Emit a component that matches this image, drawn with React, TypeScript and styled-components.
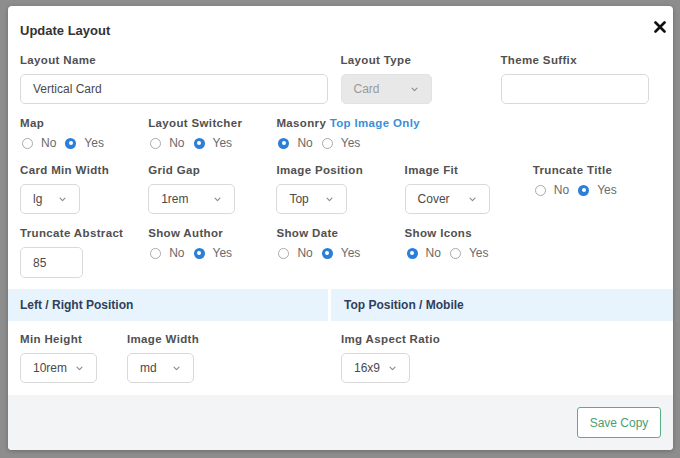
import React from "react";
import styled, { createGlobalStyle } from "styled-components";

const Global = createGlobalStyle`
  html, body { margin: 0; padding: 0; }
  body {
    width: 680px; height: 458px; overflow: hidden;
    background: #8d8d8d;
    font-family: "Liberation Sans", Arial, Helvetica, sans-serif;
  }
  * { box-sizing: border-box; }
`;

const Backdrop = styled.div`
  width: 680px;
  height: 458px;
  padding: 6px 7px 8px 8px;
  background: #8d8d8d;
`;

const Modal = styled.div`
  width: 665px;
  height: 444px;
  background: #fff;
  border-radius: 4px;
  box-shadow: 0 1px 4px rgba(0, 0, 0, 0.25);
  display: flex;
  flex-direction: column;
  overflow: hidden;
`;

const Header = styled.div`
  display: flex;
  justify-content: space-between;
  align-items: flex-start;
  padding: 15px 7px 0 12px;
  height: 47px;
`;

const Title = styled.h1`
  margin: 1px 0 0;
  font-size: 13px;
  line-height: 18px;
  font-weight: 700;
  color: #333;
`;

const Close = styled.button`
  border: 0;
  background: none;
  padding: 0;
  width: 12px;
  height: 12px;
  display: flex;
  cursor: pointer;
`;

const Body = styled.div`
  padding: 0 12px;
  display: flex;
  flex-direction: column;
  gap: 12px;
`;

const TopRow = styled.div`
  display: grid;
  grid-template-columns: 320.5px 160px 1fr;
`;

const Grid5 = styled.div`
  display: grid;
  grid-template-columns: repeat(5, minmax(0, 1fr));
`;

const Field = styled.div`
  display: flex;
  flex-direction: column;
  gap: 7px;
  min-width: 0;
`;

const Label = styled.div`
  font-size: 11.5px;
  line-height: 14px;
  font-weight: 700;
  letter-spacing: 0.35px;
  color: #505050;
  white-space: nowrap;
`;

const LinkText = styled.span`
  color: #3a8fd8;
`;

const TextInput = styled.div<{ $w: number }>`
  width: ${(p) => p.$w}px;
  height: ${(p) => (p.$w < 100 ? 31 : 30)}px;
  border: 1px solid #d9d9d9;
  border-radius: 5px;
  padding: 0 12px;
  display: flex;
  align-items: center;
  font-size: 12px;
  color: #4a4a4a;
`;

const Select = styled.div<{ $w: number; $disabled?: boolean }>`
  width: ${(p) => p.$w}px;
  height: 30px;
  border: 1px solid ${(p) => (p.$disabled ? "#e2e2e2" : "#d9d9d9")};
  background: ${(p) => (p.$disabled ? "#e8e8e8" : "#fff")};
  border-radius: 5px;
  padding: 0 13px 0 12px;
  display: flex;
  align-items: center;
  justify-content: space-between;
  font-size: 12px;
  color: ${(p) => (p.$disabled ? "#9a9a9a" : "#4a4a4a")};
`;

const Radios = styled.div`
  display: flex;
  align-items: center;
  height: 16px;
  margin-top: -2px;
  gap: 9px;
  padding-left: 2px;
`;

const RadioItem = styled.label`
  display: flex;
  align-items: center;
  gap: 8px;
  font-size: 12px;
  color: #6a6a6a;
`;

const Dot = styled.span<{ $on?: boolean }>`
  width: 11px;
  height: 11px;
  border-radius: 50%;
  flex: none;
  background: ${(p) => (p.$on ? "#2b7fd8" : "#fff")};
  border: ${(p) => (p.$on ? "none" : "1px solid #a9a9a9")};
  display: flex;
  align-items: center;
  justify-content: center;
  &::after {
    content: "";
    width: 4px;
    height: 4px;
    border-radius: 50%;
    background: #fff;
    display: ${(p) => (p.$on ? "block" : "none")};
  }
`;

const Sections = styled.div`
  margin-top: 11px;
  display: grid;
  grid-template-columns: 320px 1fr;
  column-gap: 3px;
`;

const SectionHead = styled.div<{ $pad: number }>`
  height: 32px;
  background: #e8f4fd;
  padding-left: ${(p) => p.$pad}px;
  display: flex;
  align-items: center;
  font-size: 12px;
  font-weight: 700;
  color: #2f3f5b;
`;

const SectionBody = styled.div<{ $pad: number }>`
  padding: 11px 0 0 ${(p) => p.$pad}px;
  display: flex;
  gap: 30px;
`;

const Footer = styled.div`
  margin-top: auto;
  height: 55px;
  background: #f3f4f6;
  display: flex;
  justify-content: flex-end;
  align-items: flex-start;
  padding: 12px 12px 0 0;
`;

const SaveButton = styled.button`
  width: 84px;
  height: 31px;
  border: 1.5px solid #55b184;
  border-radius: 3px;
  background: #fff;
  color: #4a9e74;
  font-family: inherit;
  font-size: 12px;
  padding: 0;
`;

const Chevron = () => (
  <svg width="7" height="5" viewBox="0 0 7 5" fill="none">
    <path d="M1 1.2 L3.5 3.6 L6 1.2" stroke="#8a8a8a" strokeWidth="1.1" strokeLinecap="round" strokeLinejoin="round" />
  </svg>
);

const Sel = ({ w, v, disabled }: { w: number; v: string; disabled?: boolean }) => (
  <Select $w={w} $disabled={disabled}>
    <span>{v}</span>
    <Chevron />
  </Select>
);

const YesNo = ({ yes }: { yes: boolean }) => (
  <Radios>
    <RadioItem>
      <Dot $on={!yes} />
      No
    </RadioItem>
    <RadioItem>
      <Dot $on={yes} />
      Yes
    </RadioItem>
  </Radios>
);

export default function App() {
  return (
    <>
      <Global />
      <Backdrop>
        <Modal>
          <Header>
            <Title>Update Layout</Title>
            <Close aria-label="Close">
              <svg width="12" height="12" viewBox="0 0 12 12">
                <path d="M1.5 1.5 L10.5 10.5 M10.5 1.5 L1.5 10.5" stroke="#111" strokeWidth="2.6" strokeLinecap="round" />
              </svg>
            </Close>
          </Header>
          <Body>
            <TopRow>
              <Field>
                <Label>Layout Name</Label>
                <TextInput $w={308}>Vertical Card</TextInput>
              </Field>
              <Field>
                <Label>Layout Type</Label>
                <Sel w={91} v="Card" disabled />
              </Field>
              <Field>
                <Label>Theme Suffix</Label>
                <TextInput $w={148} />
              </Field>
            </TopRow>
            <Grid5>
              <Field>
                <Label>Map</Label>
                <YesNo yes />
              </Field>
              <Field>
                <Label>Layout Switcher</Label>
                <YesNo yes />
              </Field>
              <Field>
                <Label>
                  Masonry <LinkText>Top Image Only</LinkText>
                </Label>
                <YesNo yes={false} />
              </Field>
            </Grid5>
            <Grid5>
              <Field>
                <Label>Card Min Width</Label>
                <Sel w={60} v="lg" />
              </Field>
              <Field>
                <Label>Grid Gap</Label>
                <Sel w={87} v="1rem" />
              </Field>
              <Field>
                <Label>Image Position</Label>
                <Sel w={71} v="Top" />
              </Field>
              <Field>
                <Label>Image Fit</Label>
                <Sel w={85} v="Cover" />
              </Field>
              <Field>
                <Label>Truncate Title</Label>
                <YesNo yes />
              </Field>
            </Grid5>
            <Grid5>
              <Field>
                <Label>Truncate Abstract</Label>
                <TextInput $w={63}>85</TextInput>
              </Field>
              <Field>
                <Label>Show Author</Label>
                <YesNo yes />
              </Field>
              <Field>
                <Label>Show Date</Label>
                <YesNo yes />
              </Field>
              <Field>
                <Label>Show Icons</Label>
                <YesNo yes={false} />
              </Field>
            </Grid5>
          </Body>
          <Sections>
            <div>
              <SectionHead $pad={12}>Left / Right Position</SectionHead>
              <SectionBody $pad={12}>
                <Field>
                  <Label>Min Height</Label>
                  <Sel w={77} v="10rem" />
                </Field>
                <Field>
                  <Label>Image Width</Label>
                  <Sel w={67} v="md" />
                </Field>
              </SectionBody>
            </div>
            <div>
              <SectionHead $pad={13}>Top Position / Mobile</SectionHead>
              <SectionBody $pad={10}>
                <Field>
                  <Label>Img Aspect Ratio</Label>
                  <Sel w={69} v="16x9" />
                </Field>
              </SectionBody>
            </div>
          </Sections>
          <Footer>
            <SaveButton>Save Copy</SaveButton>
          </Footer>
        </Modal>
      </Backdrop>
    </>
  );
}
